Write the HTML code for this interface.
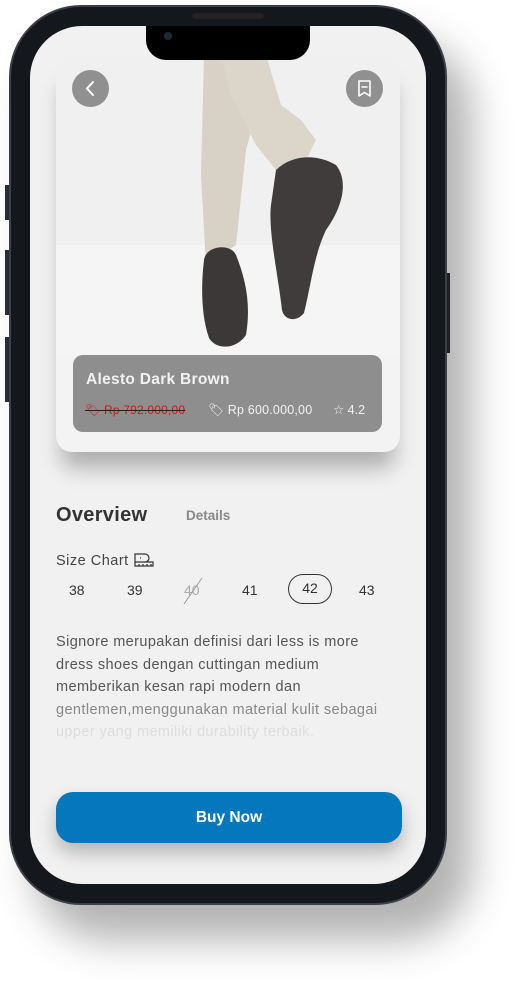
<!DOCTYPE html>
<html><head><meta charset="utf-8"><style>
*{margin:0;padding:0;box-sizing:border-box}
body{width:524px;height:987px;background:#fff;position:relative;overflow:hidden;font-family:"Liberation Sans",sans-serif}
.phone{position:absolute;left:9px;top:5px;width:438px;height:900px;border-radius:72px;background:#14171c;border:2px solid #3a3f48;box-shadow:25px 35px 40px rgba(0,0,0,.3)}
.screen{position:absolute;left:30px;top:26px;width:396px;height:858px;border-radius:52px;background:#f1f1f1;overflow:hidden}
.notch{position:absolute;left:146px;top:26px;width:164px;height:34px;background:#000;border-radius:0 0 20px 20px}
.card{position:absolute;left:26px;top:29px;width:344px;height:397px;border-radius:16px;background:#f3f3f3;box-shadow:0 22px 22px -6px rgba(0,0,0,.28);overflow:hidden}
.btn{position:absolute;width:37px;height:37px;border-radius:50%;background:#909090;top:44px}
.info{position:absolute;left:17px;top:300px;width:309px;height:77px;border-radius:10px;background:#8e8e8e;color:#f2f2f2}
.side{position:absolute;background:#2a2e36;width:4px}
.d{letter-spacing:.4px}
</style></head><body>
<div class="side" style="left:5px;top:185px;height:35px"></div>
<div class="side" style="left:5px;top:250px;height:65px"></div>
<div class="side" style="left:5px;top:337px;height:65px"></div>
<div class="side" style="left:446px;top:273px;height:80px"></div>
<div class="phone"></div>
<div class="screen">
 <div class="card">
  <svg width="344" height="300" style="position:absolute;left:0;top:0">
   <rect width="344" height="300" fill="#f0f0f0"/>
   <rect y="190" width="344" height="110" fill="#f5f5f5"/>
   <path d="M148 0 L200 0 L205 40 L190 95 L180 190 L150 210 L145 120 Z" fill="#d8d1c6"/>
   <path d="M165 0 L210 0 L225 50 L245 65 L260 85 L245 115 L220 115 L200 90 L175 40Z" fill="#dcd5ca"/>
   <path d="M148 205 C150 190 175 188 180 200 C190 225 195 250 190 280 C180 295 160 295 153 283 C145 260 145 230 148 205Z" fill="#3c3838"/>
   <path d="M220 115 C235 100 260 98 280 110 C292 125 288 150 270 175 C258 200 255 230 248 258 C240 268 228 265 226 255 C222 220 212 175 215 150 Z" fill="#403c3c"/>
  </svg>
  <div class="info">
   <div style="position:absolute;left:13px;top:16px;font-weight:bold;font-size:15.5px;letter-spacing:.3px">Alesto Dark Brown</div>
   <div style="position:absolute;left:12px;top:48px;font-size:12px;color:#d11;text-decoration:line-through;text-decoration-color:#222;letter-spacing:.2px">🏷 Rp 792.000,00</div>
   <div style="position:absolute;left:135px;top:48px;font-size:12.5px;letter-spacing:.2px">🏷 Rp 600.000,00</div>
   <div style="position:absolute;left:260px;top:47px;font-size:12.5px">☆ 4.2</div>
  </div>
 </div>
 <div class="btn" style="left:42px"><svg width="37" height="37"><path d="M21 12 L15 18.5 L21 25" stroke="#fff" stroke-width="2" fill="none" stroke-linecap="round"/></svg></div>
 <div class="btn" style="left:316px"><svg width="37" height="37"><path d="M13 11h11v15l-5.5-3.5L13 26Z M15.5 17h6" stroke="#fff" stroke-width="1.6" fill="none" stroke-linejoin="round"/></svg></div>
 <div style="position:absolute;left:26px;top:478px;font-size:20px;font-weight:bold;color:#333;letter-spacing:.3px">Overview</div>
 <div style="position:absolute;left:156px;top:482px;font-size:13.5px;font-weight:bold;color:#888">Details</div>
 <div style="position:absolute;left:26px;top:525px;font-size:14.5px;color:#444;letter-spacing:.5px">Size Chart <svg width="22" height="16" style="vertical-align:-2px"><path d="M2 3h10a4 4 0 010 8H2Z M2 11v4h18v-4h-8 M7 7h1 M6 15v-2 M10 15v-2 M14 15v-2 M18 15v-2" stroke="#333" fill="none" stroke-width="1.2"/></svg></div>
 <div style="position:absolute;top:556px;left:0;width:396px;font-size:14px;color:#333">
  <span style="position:absolute;left:39px">38</span>
  <span style="position:absolute;left:97px">39</span>
  <span style="position:absolute;left:154px;color:#aaa">40</span>
  <svg style="position:absolute;left:150px;top:-6px" width="26" height="30"><path d="M4 28 L22 2" stroke="#999"/></svg>
  <span style="position:absolute;left:212px">41</span>
  <span style="position:absolute;left:258px;top:-8px;width:44px;height:30px;border:1.5px solid #333;border-radius:15px;text-align:center;line-height:27px">42</span>
  <span style="position:absolute;left:329px">43</span>
 </div>
 <div class="d" style="position:absolute;left:26px;top:605px;width:360px;font-size:14.5px;line-height:22.5px;color:#555;white-space:nowrap">Signore merupakan definisi dari less is more<br>dress shoes dengan cuttingan medium<br>memberikan kesan rapi modern dan<br><span style="color:#888">gentlemen,menggunakan material kulit sebagai</span><br><span style="color:#ddd">upper yang memiliki durability terbaik.</span></div>
 <div style="position:absolute;left:26px;top:766px;width:346px;height:51px;border-radius:17px;background:#0477bd;color:#fff;font-weight:bold;font-size:15.5px;text-align:center;line-height:51px;box-shadow:0 10px 18px rgba(0,0,0,.25)">Buy Now</div>
</div>
<div class="notch"><div style="position:absolute;left:18px;top:6px;width:8px;height:8px;border-radius:50%;background:#1a2a33"></div></div>
<div style="position:absolute;left:192px;top:13px;width:72px;height:6px;border-radius:3px;background:#222"></div>
</body></html>
